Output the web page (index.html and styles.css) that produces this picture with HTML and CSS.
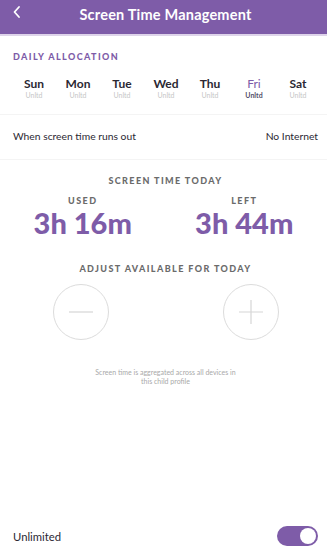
FILE: index.html
```html
<!DOCTYPE html>
<html>
<head>
<meta charset="utf-8">
<link rel="stylesheet" href="styles.css">
</head>
<body>
<div class="app">
  <header class="topbar">
    <svg class="back" width="10" height="14" viewBox="0 0 10 14"><path d="M7 2 L2.5 7 L7 12" fill="none" stroke="#fff" stroke-width="1.8" stroke-linecap="round" stroke-linejoin="round"/></svg>
    <h1 class="title">Screen Time Management</h1>
  </header>
  <div class="topline"></div>

  <section class="daily">
    <div class="section-label">DAILY ALLOCATION</div>
    <div class="days">
      <div class="day"><span class="dname">Sun</span><span class="dval">Unltd</span></div>
      <div class="day"><span class="dname">Mon</span><span class="dval">Unltd</span></div>
      <div class="day"><span class="dname">Tue</span><span class="dval">Unltd</span></div>
      <div class="day"><span class="dname">Wed</span><span class="dval">Unltd</span></div>
      <div class="day"><span class="dname">Thu</span><span class="dval">Unltd</span></div>
      <div class="day active"><span class="dname">Fri</span><span class="dval">Unltd</span></div>
      <div class="day"><span class="dname">Sat</span><span class="dval">Unltd</span></div>
    </div>
  </section>

  <div class="row runout">
    <span>When screen time runs out</span>
    <span>No Internet</span>
  </div>

  <section class="today">
    <div class="caps">SCREEN TIME TODAY</div>
    <div class="stats">
      <div class="stat"><div class="caps small">USED</div><div class="big">3h 16m</div></div>
      <div class="stat"><div class="caps small">LEFT</div><div class="big">3h 44m</div></div>
    </div>
    <div class="caps adjust">ADJUST AVAILABLE FOR TODAY</div>
    <div class="buttons">
      <div class="circle"><svg width="24" height="24" viewBox="0 0 24 24"><path d="M0 12 H24" stroke="#d6d6d6" stroke-width="1.2"/></svg></div>
      <div class="circle"><svg width="24" height="24" viewBox="0 0 24 24"><path d="M0 12 H24 M12 0 V24" stroke="#d6d6d6" stroke-width="1.2"/></svg></div>
    </div>
    <p class="note">Screen time is aggregated across all devices in<br>this child profile</p>
  </section>

  <div class="spacer"></div>

  <div class="row unlimited">
    <span>Unlimited</span>
    <div class="toggle"><div class="knob"></div></div>
  </div>
</div>
</body>
</html>
```
FILE: styles.css
```css
* { box-sizing: border-box; margin: 0; padding: 0; }
html, body { width: 327px; height: 556px; background: #fff; }
body { font-family: Lato, "Open Sans", sans-serif; color: #2b2833; overflow: hidden; }
.app { display: flex; flex-direction: column; height: 556px; }

.topbar {
  height: 34px;
  background: #7e5ca8;
  display: flex;
  align-items: center;
  justify-content: center;
  position: relative;
}
.back { position: absolute; left: 12px; top: 5px; }
.title { color: #fff; font-size: 14.5px; font-weight: 700; letter-spacing: 0.2px; margin-top: -6px; margin-left: 4px; }
.topline { height: 2px; background: #c8b8dc; opacity: 0.6; }

.daily { padding: 15px 0 0 0; border-bottom: 1px solid #f4f4f4; height: 79px; }
.section-label {
  color: #7e5ca8;
  font-size: 9px;
  font-weight: 900;
  letter-spacing: 1.4px;
  padding-left: 13px;
}
.days { display: grid; grid-template-columns: repeat(7, 44px); padding-left: 12px; margin-top: 15px; }
.day { display: flex; flex-direction: column; align-items: center; }
.dname { font-size: 12px; font-weight: 700; color: #2b2833; line-height: 14px; }
.dval { font-size: 7px; color: #c6c6c6; line-height: 9px; }
.day.active .dname { color: #7e5ca8; font-weight: 400; }
.day.active .dval { color: #55506a; font-weight: 700; }

.row { display: flex; justify-content: space-between; align-items: center; padding: 0 9px 0 13px; }
.runout { height: 45px; font-size: 10.3px; color: #2b2833; border-bottom: 1px solid #f4f4f4; padding-bottom: 2px; }

.today { display: flex; flex-direction: column; align-items: center; padding-top: 15px; }
.caps { font-size: 9px; font-weight: 900; letter-spacing: 1.4px; color: #6b6b6b; line-height: 11px; margin-left: 4px; }
.stats { display: flex; width: 100%; margin-top: 9px; }
.stat { flex: 1; display: flex; flex-direction: column; align-items: center; }
.stat:first-child { padding-left: 2px; }
.stat:last-child { padding-right: 2px; }
.caps.small { margin-left: 0; }
.big { font-size: 29px; font-weight: 900; color: #7e5ca8; line-height: 34px; }
.adjust { margin-top: 23px; }
.buttons { display: flex; justify-content: space-between; width: 100%; padding: 0 48px 0 53px; margin-top: 10px; }
.circle {
  width: 56px; height: 56px; border-radius: 50%;
  border: 1px solid #dcdcdc;
  display: flex; align-items: center; justify-content: center;
}
.note { font-size: 7px; color: #a9a9a9; text-align: center; line-height: 8.5px; margin-top: 28px; margin-left: 4px; }

.spacer { flex: 1; }
.unlimited { height: 44px; font-size: 11.3px; padding-top: 4px; }
.toggle {
  width: 41px; height: 20px; border-radius: 10px; background: #7e5ca8;
  display: flex; align-items: center; justify-content: flex-end; padding-right: 2px;
}
.knob { width: 16px; height: 16px; border-radius: 50%; background: #fff; }
```
